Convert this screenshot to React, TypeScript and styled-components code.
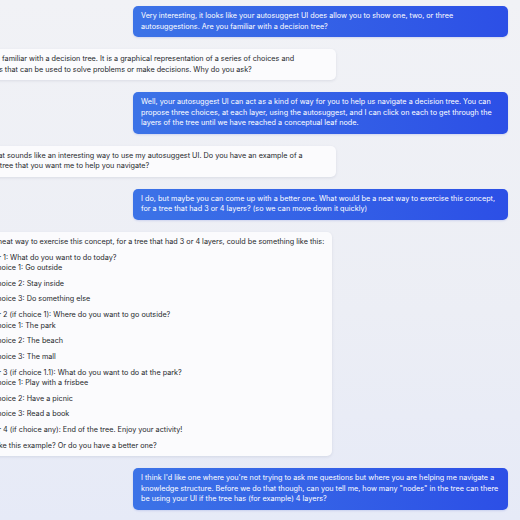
import React from "react";
import styled, { createGlobalStyle } from "styled-components";

const GlobalStyle = createGlobalStyle`
  html, body {
    margin: 0;
    padding: 0;
    height: 520px;
    overflow: hidden;
  }
  body {
    font-family: Inter, "Liberation Sans", sans-serif;
    background: linear-gradient(180deg, #f1f2f6 0%, #eceef5 60%, #e6eaf7 100%);
  }
`;

type Layer = { title: string; choices: string[] };

const layers: Layer[] = [
  {
    title: "Layer 1: What do you want to do today?",
    choices: ["Choice 1: Go outside", "Choice 2: Stay inside", "Choice 3: Do something else"],
  },
  {
    title: "Layer 2 (if choice 1): Where do you want to go outside?",
    choices: ["Choice 1: The park", "Choice 2: The beach", "Choice 3: The mall"],
  },
  {
    title: "Layer 3 (if choice 1.1): What do you want to do at the park?",
    choices: ["Choice 1: Play with a frisbee", "Choice 2: Have a picnic", "Choice 3: Read a book"],
  },
  {
    title: "Layer 4 (if choice any): End of the tree. Enjoy your activity!",
    choices: [],
  },
];

function App() {
  return (
    <>
      <GlobalStyle />
      <Thread>
        <Bubble $mine>
          Very interesting, it looks like your autosuggest UI does allow you to show one, two, or three
          autosuggestions. Are you familiar with a decision tree?
        </Bubble>
        <Bubble>
          Yes, I am familiar with a decision tree. It is a graphical representation of a series of choices and
          outcomes that can be used to solve problems or make decisions. Why do you ask?
        </Bubble>
        <Bubble $mine>
          Well, your autosuggest UI can act as a kind of way for you to help us navigate a decision tree. You can
          propose three choices, at each layer, using the autosuggest, and I can click on each to get through the
          layers of the tree until we have reached a conceptual leaf node.
        </Bubble>
        <Bubble>
          Great, that sounds like an interesting way to use my autosuggest UI. Do you have an example of a
          decision tree that you want me to help you navigate?
        </Bubble>
        <Bubble $mine>
          I do, but maybe you can come up with a better one. What would be a neat way to exercise this concept,
          for a tree that had 3 or 4 layers? (so we can move down it quickly)
        </Bubble>
        <Bubble>
          <Para>
            I think a neat way to exercise this concept, for a tree that had 3 or 4 layers, could be something like
            this:
          </Para>
          <LayerList>
            {layers.map((layer) => (
              <LayerItem key={layer.title}>
                {layer.title}
                {layer.choices.length > 0 && (
                  <ChoiceList>
                    {layer.choices.map((c) => (
                      <ChoiceItem key={c}>{c}</ChoiceItem>
                    ))}
                  </ChoiceList>
                )}
              </LayerItem>
            ))}
          </LayerList>
          <Para>Do you like this example? Or do you have a better one?</Para>
        </Bubble>
        <Bubble $mine>
          I think I'd like one where you're not trying to ask me questions but where you are helping me navigate a
          knowledge structure. Before we do that though, can you tell me, how many "nodes" in the tree can there
          be using your UI if the tree has (for example) 4 layers?
        </Bubble>
      </Thread>
    </>
  );
}

export default App;

const Thread = styled.div`
  display: flex;
  flex-direction: column;
  row-gap: 12px;
  width: 547px;
  margin-left: -39px;
  padding-top: 6px;
`;

const Bubble = styled.div<{ $mine?: boolean }>`
  box-sizing: border-box;
  max-width: 375px;
  padding: 5px 8px;
  border-radius: 5px;
  font-size: 7.25px;
  line-height: 10.5px;
  align-self: ${(p) => (p.$mine ? "flex-end" : "flex-start")};
  color: ${(p) => (p.$mine ? "#ffffff" : "#26282c")};
  background: ${(p) => (p.$mine ? "linear-gradient(90deg, #3c73e7 0%, #2c4fe6 100%)" : "#fbfbfd")};
  box-shadow: ${(p) =>
    p.$mine ? "0 1px 2px rgba(40, 70, 200, 0.15)" : "0 1px 3px rgba(30, 40, 80, 0.1)"};
`;

const Para = styled.p`
  margin: 0;
`;

const LayerList = styled.ul`
  margin: 5.5px 0 5px;
  padding-left: 13px;
  list-style: none;
`;

const LayerItem = styled.li`
  & + & {
    margin-top: 5.5px;
  }
`;

const ChoiceList = styled.ul`
  margin: 0;
  padding-left: 10px;
  list-style: none;
`;

const ChoiceItem = styled.li`
  & + & {
    margin-top: 5px;
  }
`;
